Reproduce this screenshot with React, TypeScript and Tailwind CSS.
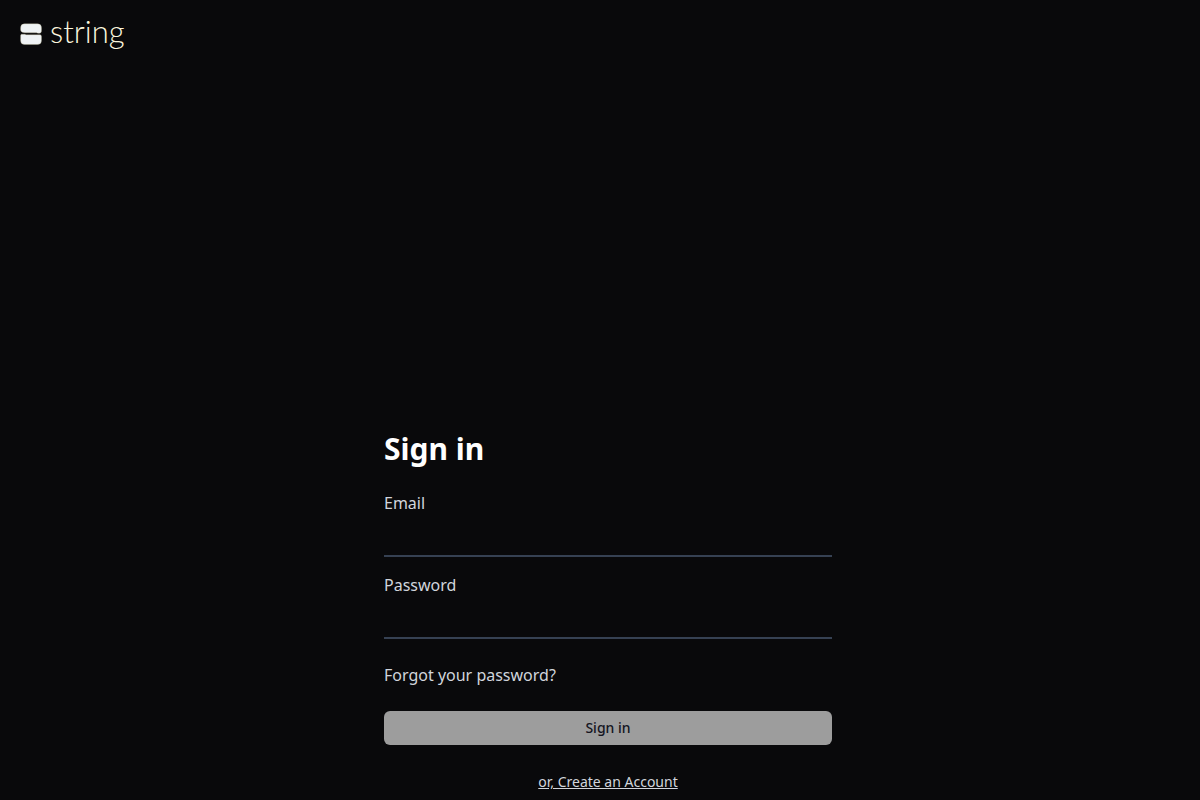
import { useState } from "react";
import type { InputHTMLAttributes } from "react";

interface FieldProps extends InputHTMLAttributes<HTMLInputElement> {
    id: string;
    label: string;
}

const Logo = () => {
    return (
        <a href="/" className="flex items-start gap-2">
            <svg viewBox="0 0 22 22" className="mt-[3px] h-[22px] w-[22px]" aria-hidden="true">
                <g fill="#eff3f5" stroke="#b5ad85" strokeWidth="0.3">
                    <path d="M4.500 .8h13a4 4 0 0 1 4 4v2.700c0 1.900-.6 2.700-2 2.700H18L16.500 9.800H5C2.200 9.800.6 8.800.6 6.800v-2a4 4 0 0 1 3.900-4Z" />
                    <path d="M2 11.200h3l1 .5h13.500c1.300 0 2 .6 2 1.800v4a4 4 0 0 1-4 4h-13a4 4 0 0 1-3.900-4v-4.800c0-1 .4-1.500 1.400-1.500Z" />
                </g>
            </svg>
            <span className="font-['Lato',sans-serif] text-[31px] leading-[22px] font-light text-[#fbf6de]">string</span>
        </a>
    );
};

const Field = ({ id, label, ...props }: FieldProps) => {
    return (
        <div className="flex flex-col">
            <label htmlFor={id}>{label}</label>
            <input
                id={id}
                name={id}
                className="h-[42px] w-full border-b-2 border-gray-700 bg-transparent outline-none focus:border-gray-400"
                {...props}
            />
        </div>
    );
};

export default function App() {
    const [email, setEmail] = useState("");
    const [password, setPassword] = useState("");

    return (
        <div className="flex min-h-screen flex-col bg-[#09090b] font-['Noto_Sans',sans-serif] text-base text-gray-300">
            <header className="flex p-5">
                <Logo />
            </header>
            <main className="flex flex-1 flex-col justify-end pb-2 pl-4">
                <form className="mx-auto w-full max-w-md" onSubmit={(e) => e.preventDefault()}>
                    <h1 className="mb-6 text-3xl font-bold text-white">Sign in</h1>
                    <div className="flex flex-col gap-4">
                        <Field
                            id="email"
                            label="Email"
                            type="email"
                            value={email}
                            onChange={(e) => setEmail(e.target.value)}
                        />
                        <Field
                            id="password"
                            label="Password"
                            type="password"
                            value={password}
                            onChange={(e) => setPassword(e.target.value)}
                        />
                    </div>
                    <div className="my-6">
                        <a href="/forgot-password">Forgot your password?</a>
                    </div>
                    <button
                        type="submit"
                        className="flex h-[34px] w-full items-center justify-center rounded-md bg-[#9d9d9d] text-sm font-medium text-[#14151f]"
                    >
                        Sign in
                    </button>
                    <div className="mt-[27px] text-center text-sm">
                        <a href="/sign-up" className="underline">or, Create an Account</a>
                    </div>
                </form>
            </main>
        </div>
    );
}
